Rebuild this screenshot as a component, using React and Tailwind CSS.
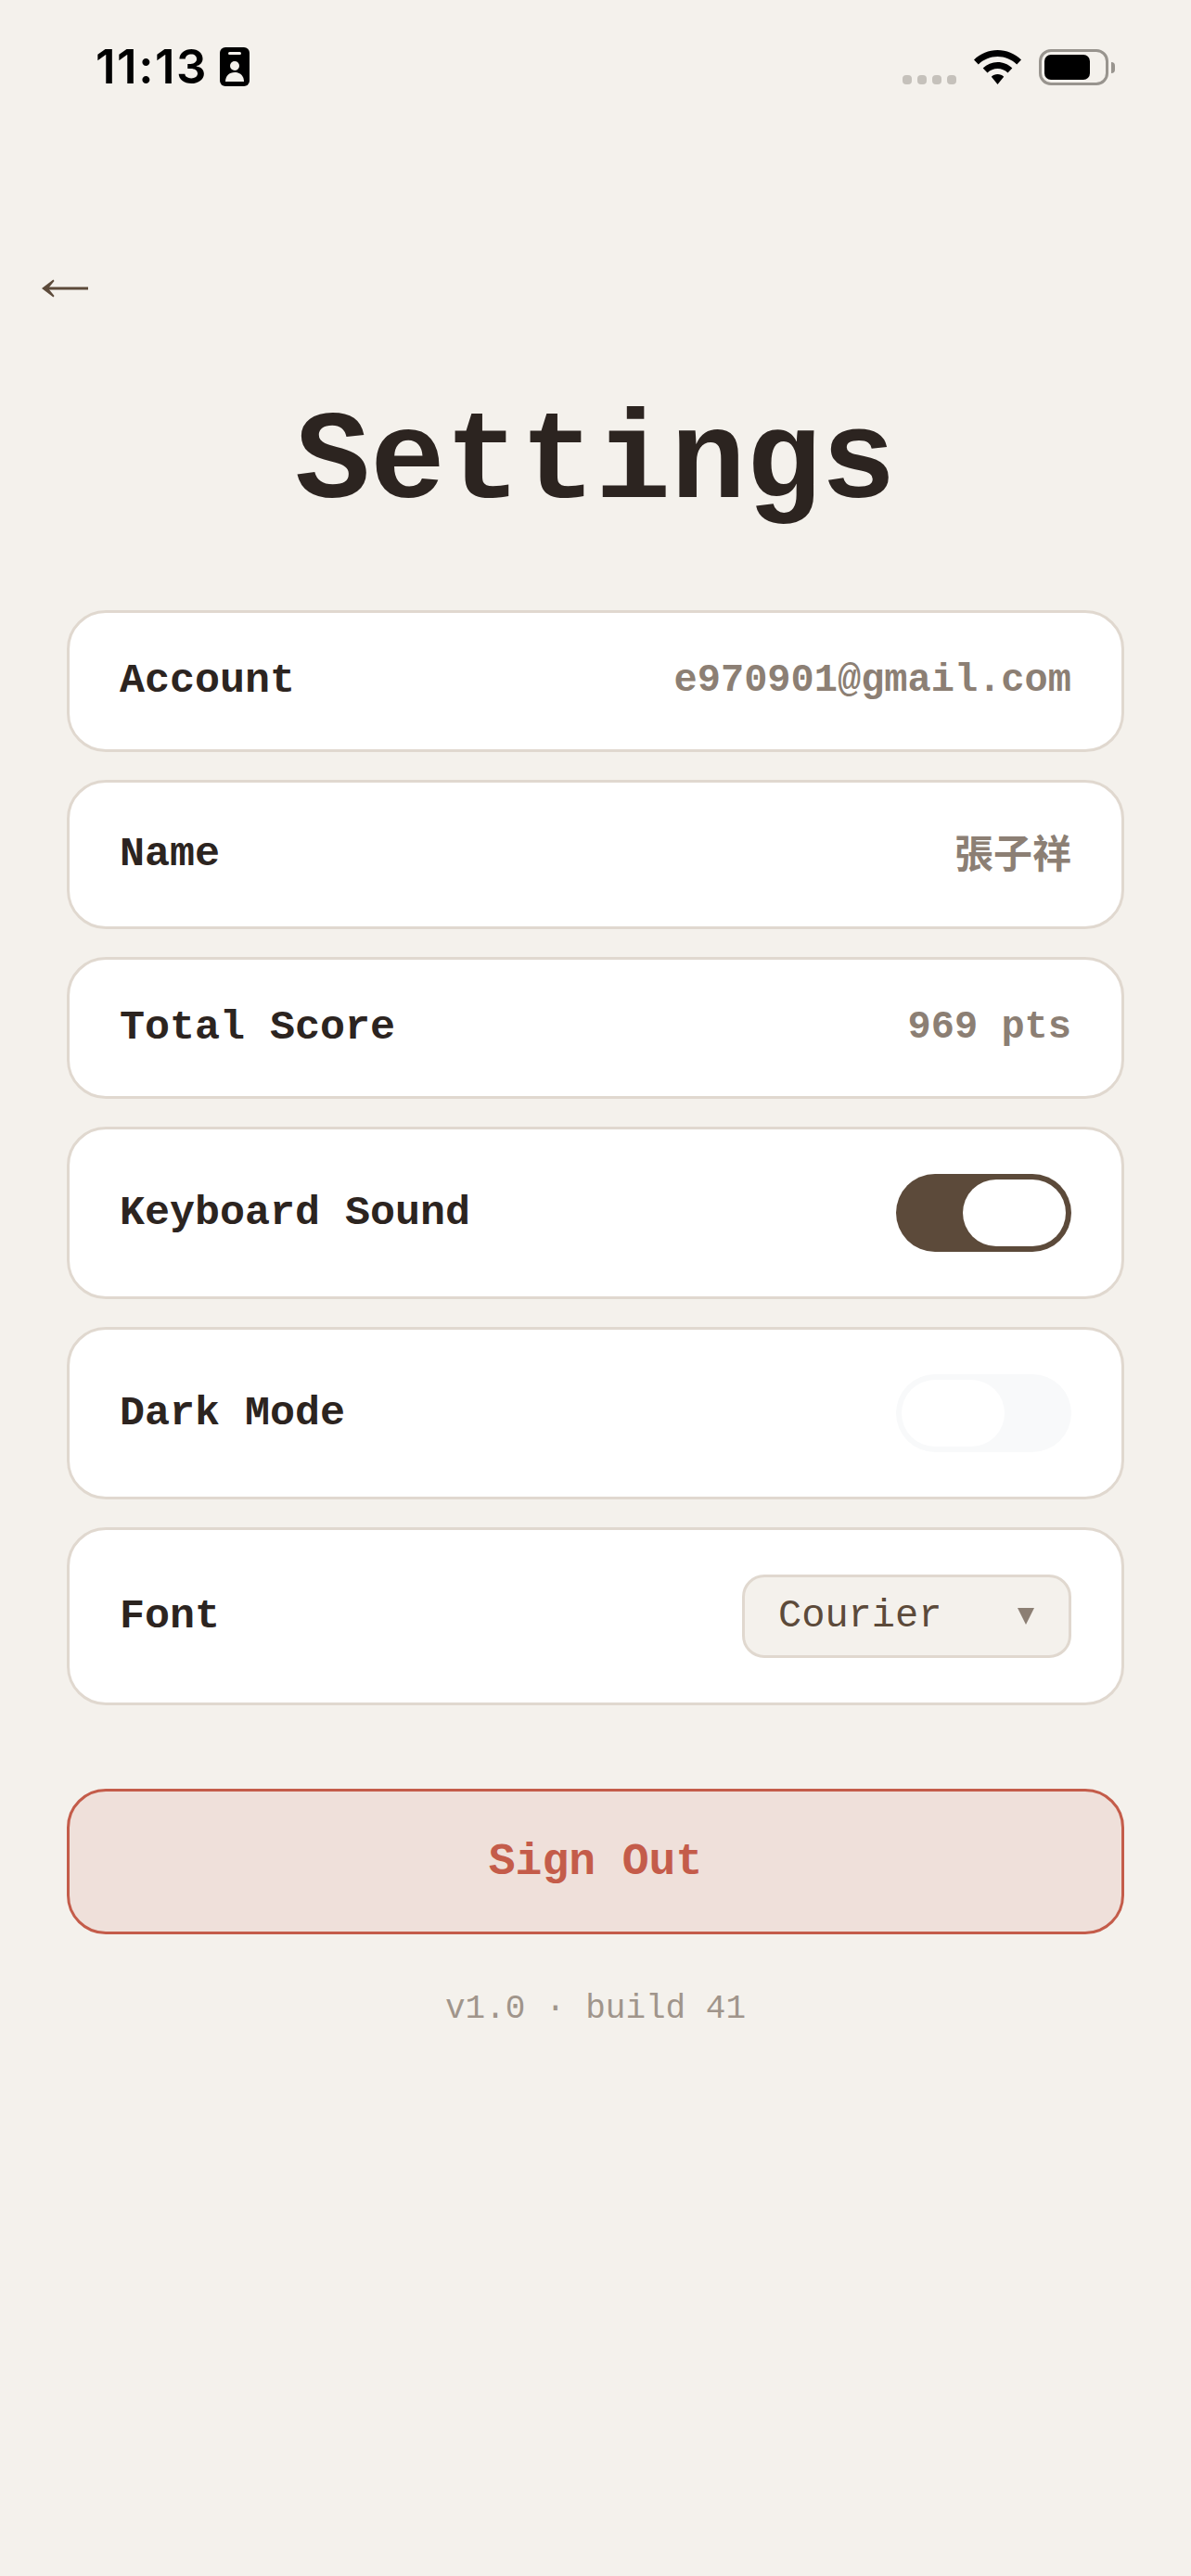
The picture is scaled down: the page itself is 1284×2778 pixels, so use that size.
import { useState } from 'react'

function Row({ label, children, className = '' }) {
  return (
    <div className={`flex items-center justify-between rounded-[42px] border-[3px] border-[#e0d8cf] bg-white px-[54px] py-[48px] ${className}`}>
      <span className="text-[45px] font-bold leading-[51px] text-[#2c2420]">{label}</span>
      {children}
    </div>
  )
}

function Toggle({ on, onClick }) {
  return (
    <button
      onClick={onClick}
      className={`flex h-[84px] w-[189px] items-center rounded-full p-[6px] ${on ? 'justify-end bg-[#5c4a3a]' : 'justify-start bg-[#f8f9fa]'}`}
    >
      <span className="block h-[72px] w-[111px] rounded-full bg-white" />
    </button>
  )
}

function StatusBar() {
  return (
    <div className="flex h-[100px] items-start justify-between pl-[103px] pr-[82px] pt-[51px]">
      <div className="flex items-center">
        <span className="w-[134px] font-['Inter',sans-serif] text-[51px] font-semibold leading-[42px] tracking-[1.5px] text-black">11:13</span>
        <svg width="32" height="42" viewBox="0 0 32 42">
          <rect width="32" height="42" rx="6" fill="#000" />
          <rect x="9" y="5" width="14" height="3" rx="1.5" fill="#f4f1ec" />
          <circle cx="16" cy="20" r="5" fill="#f4f1ec" />
          <path d="M6 37c0-6 4-10 10-10s10 4 10 10z" fill="#f4f1ec" />
        </svg>
      </div>
      <div className="flex items-start">
        <div className="mt-[30px] flex gap-[6px]">
          <span className="h-[10px] w-[10px] rounded-[4px] bg-[#c5c1bb]" />
          <span className="h-[10px] w-[10px] rounded-[4px] bg-[#c5c1bb]" />
          <span className="h-[10px] w-[10px] rounded-[4px] bg-[#c5c1bb]" />
          <span className="h-[10px] w-[10px] rounded-[4px] bg-[#c5c1bb]" />
        </div>
        <svg className="ml-[19px] mt-[3px]" width="51" height="37" viewBox="0 0 51 37">
          <path d="M25.5 0C35 0 44 3.800 51 10.500l-4.800 5C40.500 10 33.300 7 25.500 7S10.500 10 4.800 15.500L0 10.500C7 3.800 16 0 25.500 0z" />
          <path d="M25.500 13c6 0 11.500 2.300 15.800 6.500l-4.800 5C33.500 21.600 29.700 20 25.500 20s-8 1.600-11 4.500l-4.800-5C14 15.300 19.500 13 25.500 13z" />
          <path d="M25.500 26c2.600 0 5 1 6.700 2.700L25.500 37l-6.700-8.300C20.500 27 22.900 26 25.500 26z" />
        </svg>
        <div className="ml-[19px] mt-[2px] flex items-center">
          <div className="h-[39px] w-[75px] rounded-[13px] border-[3px] border-[#98948e] p-[3px]">
            <div className="h-full w-[49px] rounded-[7px] bg-black" />
          </div>
          <div className="ml-[3px] h-[12px] w-[4px] rounded-r-full bg-[#98948e]" />
        </div>
      </div>
    </div>
  )
}

export default function App() {
  const [sound, setSound] = useState(true)
  const [dark, setDark] = useState(false)

  return (
    <div className="min-h-[2778px] bg-[#f4f1ec] font-['Liberation_Mono','Noto_Sans_CJK_TC',monospace]">
      <StatusBar />

      {/* Back */}
      <div className="mt-[181px] flex h-[60px] items-center pl-[45px]">
        <svg width="50" height="20" viewBox="0 0 50 20" fill="#5c4a3a">
          <path d="M6 8.500h44v3H6z" />
          <path d="M0 10 12.500 0.500 13.500 2 7 10l6.500 8-1 1.500z" />
        </svg>
      </div>

      <h1 className="mt-[85px] text-center text-[135px] font-bold leading-[150px] text-[#2c2420]">Settings</h1>

      <div className="mx-[72px] mt-[82px] flex flex-col gap-[30px]">
        <Row label="Account">
          <span className="text-[42px] font-bold leading-[51px] text-[#8c7f74]">e970901@gmail.com</span>
        </Row>
        <Row label="Name">
          <span className="block pt-[8px] text-[42px] font-bold leading-[51px] text-[#8c7f74]">張子祥</span>
        </Row>
        <Row label="Total Score">
          <span className="text-[42px] font-bold leading-[51px] text-[#8c7f74]">969 pts</span>
        </Row>
        <Row label="Keyboard Sound">
          <Toggle on={sound} onClick={() => setSound(!sound)} />
        </Row>
        <Row label="Dark Mode">
          <Toggle on={dark} onClick={() => setDark(!dark)} />
        </Row>
        <Row label="Font">
          <button className="flex h-[90px] w-[355px] items-center justify-between rounded-[24px] border-[3px] border-[#e0d8cf] bg-[#f4f1ec] pl-[36px] pr-[37px]">
            <span className="text-[42px] leading-none text-[#5c4a3a]">Courier</span>
            <svg width="18" height="18" viewBox="0 0 18 18" fill="#8c7f74">
              <path d="M0 0h18L9 18z" />
            </svg>
          </button>
        </Row>
      </div>

      <button className="mx-[72px] mt-[90px] flex h-[157px] w-[1140px] items-center justify-center rounded-[42px] border-[3px] border-[#c45c4a] bg-[#efe0da] text-[48px] font-bold text-[#c45c4a]">
        Sign Out
      </button>

      <p className="mt-[60px] text-center text-[36px] leading-[42px] text-[#8c7f74] opacity-80">v1.0 · build 41</p>
    </div>
  )
}
